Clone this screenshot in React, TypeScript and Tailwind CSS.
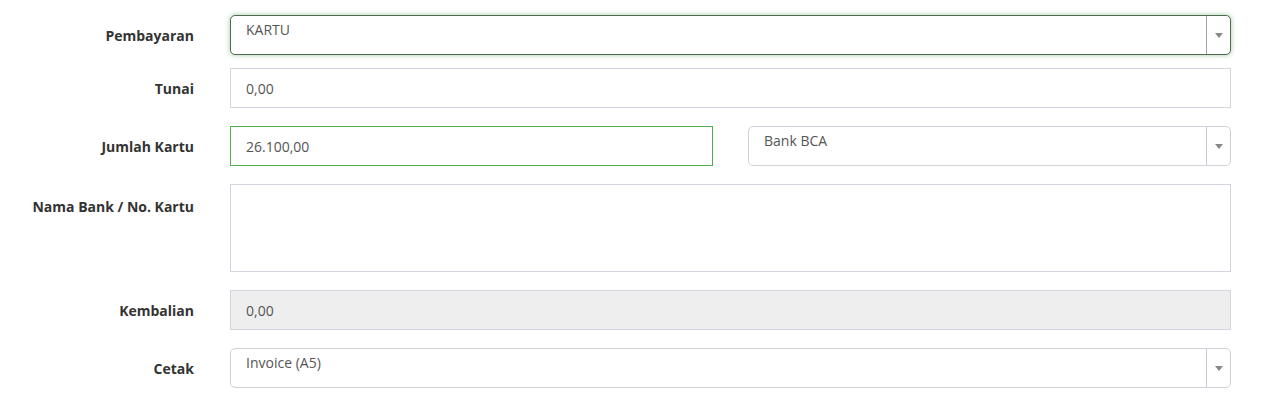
import { ReactNode } from 'react';

const font = { fontFamily: '"Open Sans", "Noto Sans", sans-serif' };

function Row({ label, children, top = false, className = '' }: { label: string; children: ReactNode; top?: boolean; className?: string }) {
  return (
    <div className={`flex gap-[36px] ${top ? 'items-start' : 'items-center'} ${className}`}>
      <label className={`w-[194px] shrink-0 text-right text-[14px] font-bold text-[#333] ${top ? 'pt-[12px]' : ''}`}>
        {label}
      </label>
      <div className="w-[1001px] shrink-0">{children}</div>
    </div>
  );
}

function Select({ value, focused = false }: { value: string; focused?: boolean }) {
  return (
    <div
      className={`flex h-[40px] w-full rounded-[5px] border bg-white ${
        focused ? 'border-[#4f6a4f] shadow-[0_0_4px_1px_rgba(110,170,110,0.45)]' : 'border-[#cfd3d9]'
      }`}
    >
      <div className="flex-1 px-[15px] pt-[4px] text-[14px] leading-[20px] text-[#555]">{value}</div>
      <div className={`flex w-[24px] items-center justify-center border-l ${focused ? 'border-[#9aa89a]' : 'border-[#c8ccd2]'}`}>
        <svg width="8" height="5" viewBox="0 0 8 5">
          <path d="M0 0 H8 L4 5 Z" fill="#888" />
        </svg>
      </div>
    </div>
  );
}

function Input({ value, green = false, disabled = false }: { value: string; green?: boolean; disabled?: boolean }) {
  return (
    <div
      className={`flex h-[40px] w-full items-center border px-[15px] text-[14px] text-[#555] ${
        green ? 'border-[#4cae4c]' : 'border-[#d2d6de]'
      } ${disabled ? 'bg-[#eeeeee]' : 'bg-white'}`}
    >
      {value}
    </div>
  );
}

export default function App() {
  return (
    <div className="h-[400px] w-[1280px] bg-white pt-[15px]" style={font}>
      <Row label="Pembayaran">
        <Select value="KARTU" focused />
      </Row>
      <Row label="Tunai" className="mt-[13px]">
        <Input value="0,00" />
      </Row>
      <Row label="Jumlah Kartu" className="mt-[18px]">
        <div className="grid grid-cols-2 gap-[35px]">
          <Input value="26.100,00" green />
          <Select value="Bank BCA" />
        </div>
      </Row>
      <Row label="Nama Bank / No. Kartu" top className="mt-[18px]">
        <div className="h-[88px] w-full border border-[#d2d6de] bg-white" />
      </Row>
      <Row label="Kembalian" className="mt-[18px]">
        <Input value="0,00" disabled />
      </Row>
      <Row label="Cetak" className="mt-[18px]">
        <Select value="Invoice (A5)" />
      </Row>
    </div>
  );
}
